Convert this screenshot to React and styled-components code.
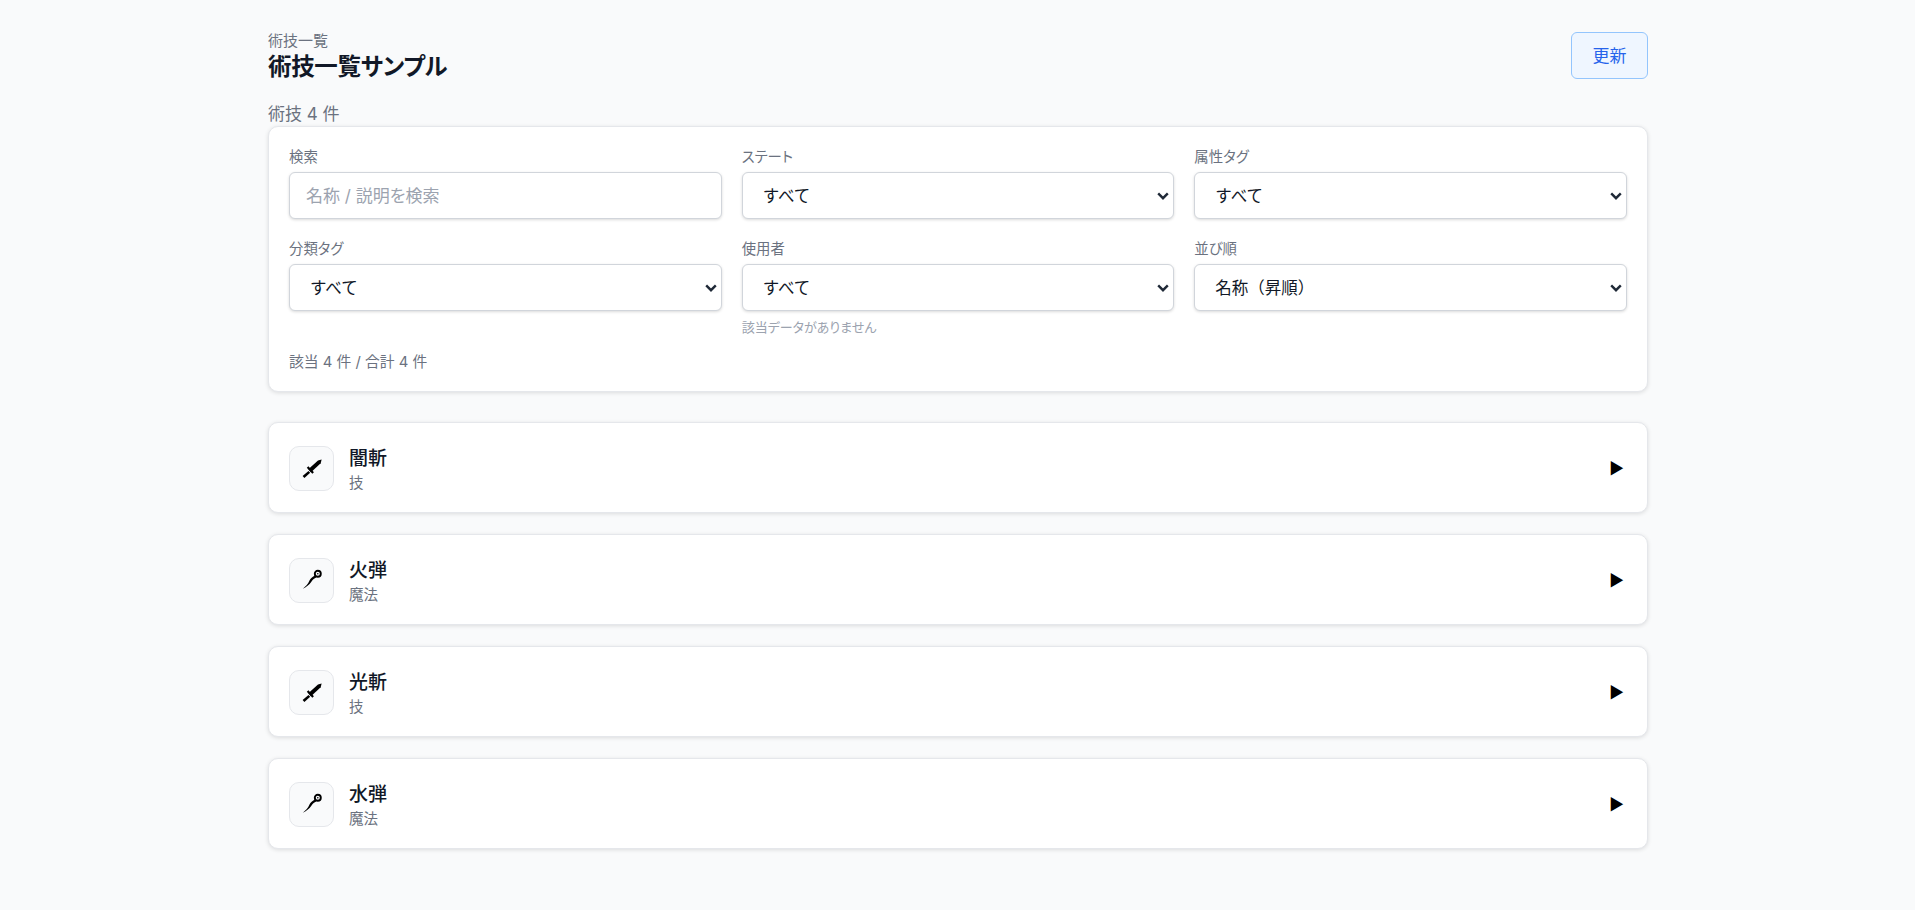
import React from "react";
import styled, { createGlobalStyle } from "styled-components";

const GlobalStyle = createGlobalStyle`
  * {
    box-sizing: border-box;
  }
  body {
    margin: 0;
    background: #f9fafb;
    color: #111827;
    font-family: Inter, "Noto Sans CJK JP", sans-serif;
    font-feature-settings: "palt";
  }
`;

const Page = styled.main`
  width: 1380px;
  margin-left: 268px;
  padding: 32px 0;
`;

const Header = styled.header`
  display: flex;
  justify-content: space-between;
  align-items: flex-start;
`;

const Eyebrow = styled.div`
  font-size: 15px;
  line-height: 18px;
  color: #6b7280;
`;

const Title = styled.h1`
  margin: 0;
  font-size: 23.5px;
  letter-spacing: -0.35px;
  line-height: 34px;
  font-weight: 700;
`;

const RefreshButton = styled.button`
  width: 77px;
  height: 47px;
  padding: 0 0 2px;
  font: inherit;
  font-size: 17px;
  color: #2563eb;
  background: #eff6ff;
  border: 1px solid #93c5fd;
  border-radius: 6px;
`;

const Count = styled.div`
  margin-top: 18px;
  font-size: 17px;
  line-height: 24px;
  height: 24px;
  color: #6b7280;
`;

const FilterCard = styled.section`
  background: #fff;
  border: 1px solid #e5e7eb;
  border-radius: 10px;
  box-shadow: 0 1px 4px rgba(0, 0, 0, 0.12);
  padding: 21px 20px 20px;
`;

const FilterGrid = styled.div`
  display: grid;
  grid-template-columns: repeat(3, 1fr);
  column-gap: 20px;
  row-gap: 21px;
`;

const Field = styled.label`
  display: flex;
  flex-direction: column;
`;

const FieldLabel = styled.span`
  font-size: 14.4px;
  line-height: 18px;
  margin-bottom: 6px;
  color: #6b7280;
`;

const SearchInput = styled.input`
  width: 100%;
  height: 47px;
  padding: 0 16px;
  font-family: inherit;
  font-feature-settings: inherit;
  font-size: 17px;
  color: #111827;
  background: #fff;
  border: 1px solid #d1d5db;
  border-radius: 6px;
  box-shadow: 0 1px 3px rgba(0, 0, 0, 0.15);
  &::placeholder {
    color: #9ca3af;
  }
`;

const chevron = encodeURIComponent(
  '<svg xmlns="http://www.w3.org/2000/svg" width="12" height="8" viewBox="0 0 12 8"><path d="M1.2 1.4 6 6.2l4.8-4.8" fill="none" stroke="#1f2937" stroke-width="2.4"/></svg>'
);

const Select = styled.select`
  appearance: none;
  width: 100%;
  height: 47px;
  padding: 0 16px 0 20px;
  font-family: inherit;
  font-feature-settings: normal;
  font-size: 16.5px;
  color: #111827;
  background: #fff url("data:image/svg+xml,${chevron}") no-repeat right 4px center;
  border: 1px solid #d1d5db;
  border-radius: 6px;
  box-shadow: 0 1px 3px rgba(0, 0, 0, 0.15);
`;

const Hint = styled.span`
  margin-top: 7px;
  font-size: 13px;
  line-height: 18px;
  color: #9ca3af;
`;

const Summary = styled.div`
  margin-top: 17px;
  font-size: 14.8px;
  line-height: 18px;
  color: #6b7280;
`;

const SkillList = styled.div`
  display: flex;
  flex-direction: column;
  gap: 21px;
  margin-top: 30px;
`;

const SkillCard = styled.article`
  display: flex;
  align-items: center;
  height: 91px;
  padding: 0 20px;
  background: #fff;
  border: 1px solid #e5e7eb;
  border-radius: 10px;
  box-shadow: 0 1px 4px rgba(0, 0, 0, 0.12);
`;

const IconBox = styled.div`
  display: flex;
  align-items: center;
  justify-content: center;
  width: 45px;
  height: 45px;
  margin: 1px 15px 0 0;
  background: #f9fafb;
  border: 1px solid #e5e7eb;
  border-radius: 10px;
`;

const SkillText = styled.div`
  flex: 1;
  padding-top: 3px;
`;

const SkillName = styled.div`
  font-size: 19px;
  line-height: 26px;
  font-weight: 500;
  margin-bottom: 2px;
`;

const SkillKind = styled.div`
  font-size: 14.5px;
  line-height: 18px;
  color: #6b7280;
`;

const Arrow = styled.span`
  font-size: 16px;
  margin-right: 3px;
  color: #000;
`;

function SwordIcon() {
  return (
    <svg width="24" height="24" viewBox="0 0 24 24" fill="#000">
      <path d="M21.6 3.6 20.7 7.3 11 16.2 8.3 13.2 18 4.4Z" />
      <path d="M6.8 11.8 8.4 10.3 13.9 16.3 12.3 17.8Z" />
      <path d="M8.5 15 10.2 16.8 4.4 22 2.6 20Z" />
    </svg>
  );
}

function StaffIcon() {
  return (
    <svg width="24" height="24" viewBox="0 0 24 24" fill="#000">
      <path d="M2.8 20.8C6 18 8 16 9.5 12.5 10.5 10.5 12.5 9 15 7.6L16.2 9.4C13.5 10.5 12.2 12 11.2 14 9.5 17 6 19 2.8 20.8Z" />
      <circle cx="17.8" cy="5.8" r="3" fill="none" stroke="#000" strokeWidth="1.9" />
      <circle cx="17.8" cy="5.8" r="0.8" />
    </svg>
  );
}

const filters = [
  { label: "ステート", value: "すべて" },
  { label: "属性タグ", value: "すべて" },
  { label: "分類タグ", value: "すべて" },
  { label: "使用者", value: "すべて", hint: "該当データがありません" },
  { label: "並び順", value: "名称（昇順）" },
];

const skills = [
  { name: "闇斬", kind: "技", Icon: SwordIcon },
  { name: "火弾", kind: "魔法", Icon: StaffIcon },
  { name: "光斬", kind: "技", Icon: SwordIcon },
  { name: "水弾", kind: "魔法", Icon: StaffIcon },
];

export default function App() {
  return (
    <Page>
      <GlobalStyle />
      <Header>
        <div>
          <Eyebrow>術技一覧</Eyebrow>
          <Title>術技一覧サンプル</Title>
        </div>
        <RefreshButton>更新</RefreshButton>
      </Header>
      <Count>術技 4 件</Count>
      <FilterCard>
        <FilterGrid>
          <Field>
            <FieldLabel>検索</FieldLabel>
            <SearchInput placeholder="名称 / 説明を検索" />
          </Field>
          {filters.map((f) => (
            <Field key={f.label}>
              <FieldLabel>{f.label}</FieldLabel>
              <Select defaultValue={f.value}>
                <option>{f.value}</option>
              </Select>
              {f.hint && <Hint>{f.hint}</Hint>}
            </Field>
          ))}
        </FilterGrid>
        <Summary>該当 4 件 / 合計 4 件</Summary>
      </FilterCard>
      <SkillList>
        {skills.map(({ name, kind, Icon }) => (
          <SkillCard key={name}>
            <IconBox>
              <Icon />
            </IconBox>
            <SkillText>
              <SkillName>{name}</SkillName>
              <SkillKind>{kind}</SkillKind>
            </SkillText>
            <Arrow>▶</Arrow>
          </SkillCard>
        ))}
      </SkillList>
    </Page>
  );
}
